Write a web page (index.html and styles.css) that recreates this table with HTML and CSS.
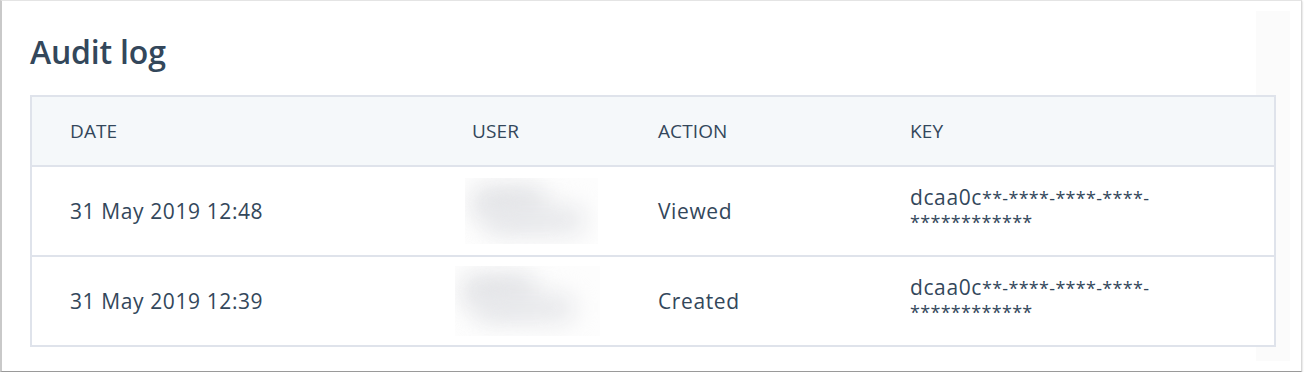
FILE: index.html
```html
<!DOCTYPE html>
<html lang="en">
<head>
<meta charset="utf-8">
<title>Audit log</title>
<link rel="stylesheet" href="styles.css">
</head>
<body>
<div class="frame">
  <div class="side-shade"></div>
  <h1 class="title">Audit log</h1>
  <table class="audit">
    <colgroup>
      <col class="c-date"><col class="c-user"><col class="c-action"><col class="c-key">
    </colgroup>
    <thead>
      <tr><th>Date</th><th>User</th><th>Action</th><th>Key</th></tr>
    </thead>
    <tbody>
      <tr>
        <td>31 May 2019 12:48</td>
        <td class="user-cell"><div class="blur-box b1"><span class="blob a"></span><span class="blob b"></span></div></td>
        <td>Viewed</td>
        <td><span class="key">dcaa0c<span class="mask">**-****-****-****-</span> <span class="mask">************</span></span></td>
      </tr>
      <tr>
        <td>31 May 2019 12:39</td>
        <td class="user-cell"><div class="blur-box b2"><span class="blob a"></span><span class="blob b"></span></div></td>
        <td>Created</td>
        <td><span class="key">dcaa0c<span class="mask">**-****-****-****-</span> <span class="mask">************</span></span></td>
      </tr>
    </tbody>
  </table>
</div>
</body>
</html>
```
FILE: styles.css
```css
* { box-sizing: border-box; }
html, body { margin: 0; padding: 0; background: #ffffff; }
body {
  font-family: "Open Sans", "Lato", sans-serif;
  color: #33475b;
}
.frame {
  position: relative;
  width: 1302px;
  height: 372px;
  border-top: 1px solid #e4e4e4;
  border-left: 2px solid #c9c9c9;
  border-bottom: 1px solid #9a9a9a;
  border-right: 1px solid #d8d8d8;
  box-shadow: 0 1px 2px rgba(0,0,0,0.25);
  padding: 31px 0 0 28px;
  background: #fff;
}
.side-shade {
  position: absolute;
  top: 10px;
  bottom: 10px;
  right: 11px;
  width: 34px;
  background: #fbfbfb;
}
.title {
  position: relative;
  margin: 0 0 23px 0;
  font-size: 32px;
  font-weight: 600;
  line-height: 40px;
  letter-spacing: -0.2px;
  color: #33475b;
}
.audit {
  position: relative;
  width: 1246px;
  border-collapse: collapse;
  border: 2px solid #dfe3eb;
  table-layout: fixed;
  background: #fff;
}
.c-date { width: 403px; }
.c-user { width: 186px; }
.c-action { width: 252px; }
.c-key { width: auto; }
.audit th {
  background: #f5f8fa;
  height: 70px;
  text-align: left;
  font-size: 19px;
  font-weight: 400;
  text-transform: uppercase;
  letter-spacing: 0.1px;
  padding: 0 0 0 38px;
  border-bottom: 2px solid #dfe3eb;
}
.audit td {
  height: 90px;
  padding: 0 0 0 38px;
  font-size: 21px;
  letter-spacing: 0.6px;
  border-bottom: 2px solid #dfe3eb;
  vertical-align: middle;
}
.audit td.user-cell { padding-left: 0; }
.key {
  display: block;
  width: 300px;
  line-height: 23px;
  padding-bottom: 2px;
}
.mask { font-size: 18px; letter-spacing: 0.3px; }
.blur-box {
  position: relative;
  height: 66px;
  background: #fdfdfd;
  overflow: hidden;
}
.b1 { margin-left: 31px; width: 133px; }
.b2 { margin-left: 21px; width: 145px; height: 70px; }
.blob {
  position: absolute;
  display: block;
  background: #e2e3e6;
  border-radius: 20px;
  filter: blur(12px);
}
.blob.a { left: 6px; top: 8px; width: 75px; height: 34px; }
.blob.b { left: 20px; top: 28px; width: 100px; height: 28px; background: #e6e7ea; }
```
